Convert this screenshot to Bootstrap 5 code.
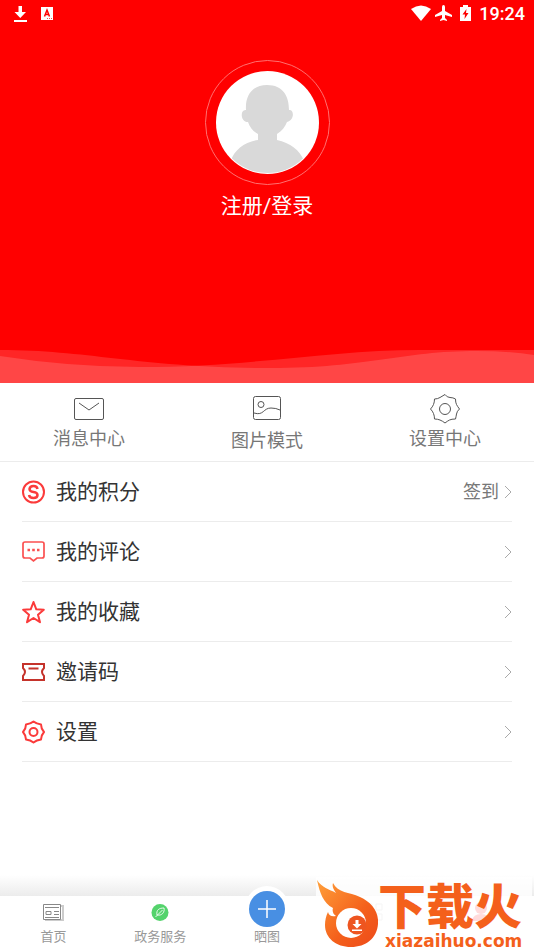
<!DOCTYPE html>
<html lang="zh-CN">
<head>
<meta charset="utf-8">
<meta name="viewport" content="width=device-width, initial-scale=1">
<title>个人中心</title>
<link href="https://cdn.jsdelivr.net/npm/bootstrap@5.3.0/dist/css/bootstrap.min.css" rel="stylesheet">
<style>
body{font-family:Roboto,"Noto Sans CJK SC",sans-serif;color:#333;background:#fff}
a{color:inherit;text-decoration:none}
svg{display:block;flex:none}
.hero{background:#f00}
.statusbar{height:27px;padding:0 9px 0 12px;font-size:18px;line-height:27px;font-weight:500}
.avatar-ring{width:125px;height:125px;margin-top:33px;border:1px solid #ff7070}
.login{font-size:21px;line-height:30px;margin:6px 0 128px}
.wave{width:100%;height:34px}
.shortcuts{border-bottom:1px solid #ececec;color:#777;font-size:18px;line-height:28px}
.shortcuts a{padding:10px 0 6px}
.menu{padding:0 22px}
.menu a{height:60px;border-bottom:1px solid #ececec;font-size:21px}
.menu .caption{margin-left:11px;padding-top:2px}
.menu .extra{font-size:18px;color:#777}
.shade{height:21px;background:linear-gradient(#fff,#ececec)}
.tabs{height:54px;background:#fff;color:#999;font-size:13px;line-height:20px}
.tabs a{padding-top:4px}
.plus{margin-top:-14px;margin-bottom:-3px}
.brand{right:2px;bottom:0;width:216px;height:73px;background:rgba(255,255,255,.8);color:#f4601b}
.brand-name{font:900 48px/48px "Noto Sans CJK SC",sans-serif;padding-top:2px;padding-bottom:5px}
.brand-url{font:700 17px/18px "DejaVu Sans",sans-serif;margin-left:7px}
</style>
</head>
<body>
<div class="d-flex flex-column min-vh-100">
<header class="hero d-flex flex-column align-items-center text-white">
  <div class="statusbar w-100 d-flex align-items-center">
    <svg width="17" height="18" viewBox="0 0 17 18"><path d="M6.500 1h3.500v6h4L8.250 13 2.500 7h4zM2 15h13v2H2z" fill="#fff"/></svg>
    <svg class="ms-2 me-auto" width="20" height="14" viewBox="0 0 20 14"><path fill="#fff" d="M4 0h12v13H4z"/><path d="M7.500 9.500L10 3l2.500 6.500M8 7.500h4" fill="none" stroke="#f00" stroke-width="1.500"/><path d="M10 11.500h5" stroke="#f00" stroke-opacity=".7" stroke-dasharray="1 1"/></svg>
    <svg width="20" height="17" viewBox="0 0 20 17"><path d="M0 4Q10-3 20 4L10 16z" fill="#fff"/></svg>
    <svg class="ms-1" width="17" height="18" viewBox="0 0 17 18"><path d="M8.500 0Q10 0 10 2v4l7 4v2l-7-2v3l2 2v1l-3.500-1L5 16v-1l2-2v-3l-7 2v-2l7-4V2q0-2 1.500-2z" fill="#fff"/></svg>
    <svg class="ms-2" width="11" height="18" viewBox="0 0 11 18"><path d="M3 0h5v2h3v14H0V2h3z" fill="#fff"/><path d="M6.500 4L2.500 9.500h2.500L4.500 14l4-6H6z" fill="#f00"/></svg>
    <span class="ms-2">19:24</span>
  </div>
  <a href="#" class="d-flex flex-column align-items-center">
    <span class="avatar-ring rounded-circle d-flex align-items-center justify-content-center">
      <svg width="103" height="103" viewBox="0 0 103 103"><defs><clipPath id="face"><circle cx="51.500" cy="51.500" r="50.500"/></clipPath></defs><circle cx="51.500" cy="51.500" r="51.500" fill="#fff"/><path clip-path="url(#face)" fill="#d9d9d9" d="M51 14C36 14 29 25 30 39C24 38 24 51 32 51C34 57 38 61 42 63V69C29 71 18 79 15 90V103H88V90C84 79 74 72 61 69V63C66 60 69 56 71 51C79 49 78 38 73 39C73 25 67 14 51 14z"/></svg>
    </span>
    <span class="login">注册/登录</span>
  </a>
  <svg class="wave" viewBox="0 0 534 34" preserveAspectRatio="none"><g fill="#fff" fill-opacity=".15"><path d="M0 1C90 1 140 19 270 19C370 19 400 2 477 2Q510 2 534 6V34H0z"/><path d="M0 7Q70 18 140 18C250 18 330 1 420 1H534V34H0z"/></g></svg>
</header>
<nav class="shortcuts row g-0 text-center">
  <a href="#" class="col d-flex flex-column align-items-center"><svg width="32" height="32" viewBox="0 0 32 32" fill="none" stroke="#555"><rect x="1.500" y="5.500" width="29" height="21" rx="1.500"/><path d="M6 10l10 7 10-7"/></svg><span>消息中心</span></a>
  <a href="#" class="col d-flex flex-column align-items-center"><svg width="32" height="34" viewBox="0 0 32 34" fill="none" stroke="#555"><rect x="2.500" y="3.500" width="27" height="23" rx="2"/><circle cx="10" cy="11.500" r="3"/><path d="M3 20c10 3 9-5 17-5q5 0 9 2"/></svg><span>图片模式</span></a>
  <a href="#" class="col d-flex flex-column align-items-center"><svg width="32" height="32" viewBox="0 0 32 32" fill="none" stroke="#555"><path d="M16 1.500q2 3 5 3t5.500 1.500q0 3.500 1 5.500t3 4.500q-2.500 2-3 5t-1 5q-4 0-6 1t-4.500 3q-2.500-2-5-3T5.500 26q0-3-1-5.500t-3-4.500q2-2 3-4.500t1-5.500q3 0 5.500-1.500t5-3z"/><circle cx="16" cy="16" r="5.500"/></svg><span>设置中心</span></a>
</nav>
<ul class="menu list-unstyled mb-0">
  <li><a href="#" class="d-flex align-items-center"><svg width="23" height="24" viewBox="0 0 23 24" fill="none" stroke="#fb3a3a" stroke-width="2"><circle cx="11.500" cy="12" r="10.500"/><path stroke-width="2.500" d="M15.500 9q-.5-3-4-3T7.500 9q0 2.500 4 3t4 3q0 3-4 3t-4.500-3"/></svg><span class="caption me-auto">我的积分</span><span class="extra me-1">签到</span><svg width="9" height="14" viewBox="0 0 9 14" fill="none" stroke="#aaa"><path d="M2 1l6 6-6 6"/></svg></a></li>
  <li><a href="#" class="d-flex align-items-center"><svg width="23" height="24" viewBox="0 0 23 24" fill="none" stroke="#fb5050" stroke-width="1.700"><path d="M3 2h17q2 0 2 2v12q0 2-2 2h-5l-3.500 3L8 18H3q-2 0-2-2V4q0-2 2-2z"/><path stroke-width="2.600" d="M5.500 10h2.500m2.200 0h2.600m2.200 0h2.500"/></svg><span class="caption me-auto">我的评论</span><svg width="9" height="14" viewBox="0 0 9 14" fill="none" stroke="#aaa"><path d="M2 1l6 6-6 6"/></svg></a></li>
  <li><a href="#" class="d-flex align-items-center"><svg width="23" height="24" viewBox="0 0 23 24" fill="none" stroke="#fb3a3a" stroke-width="2" stroke-linejoin="round"><path d="M11.500 2l2.800 7.300 7.500.4-5.800 5 2 7.500-6.500-4.200L5 22.200l2-7.500-5.800-5 7.500-.4z"/></svg><span class="caption me-auto">我的收藏</span><svg width="9" height="14" viewBox="0 0 9 14" fill="none" stroke="#aaa"><path d="M2 1l6 6-6 6"/></svg></a></li>
  <li><a href="#" class="d-flex align-items-center"><svg width="23" height="24" viewBox="0 0 23 24" fill="none" stroke="#c5332b" stroke-width="2"><path d="M1 4h21v4q-4 4 0 8v4H1v-4q4-4 0-8zM6.500 8.500h10"/></svg><span class="caption me-auto">邀请码</span><svg width="9" height="14" viewBox="0 0 9 14" fill="none" stroke="#aaa"><path d="M2 1l6 6-6 6"/></svg></a></li>
  <li><a href="#" class="d-flex align-items-center"><svg width="23" height="24" viewBox="0 0 23 24" fill="none" stroke="#fb3a3a" stroke-width="2" stroke-linejoin="round"><path d="M11.500 1.500q3 2.500 7.500 3 0 4 3 7.500-3 3.500-3 7.500-4.500.500-7.500 3-3-2.500-7.500-3 0-4-3-7.500 3-3.500 3-7.500 4.500-.5 7.500-3z"/><circle cx="11.500" cy="12" r="4"/></svg><span class="caption me-auto">设置</span><svg width="9" height="14" viewBox="0 0 9 14" fill="none" stroke="#aaa"><path d="M2 1l6 6-6 6"/></svg></a></li>
</ul>
<footer class="mt-auto position-relative">
  <div class="shade"></div>
  <nav class="tabs row g-0 text-center">
    <a href="#" class="col d-flex flex-column align-items-center"><svg width="22" height="27" viewBox="0 0 22 27"><path d="M18 6h3v14H3" fill="none" stroke="#ccc" stroke-width="2"/><path fill="#fff" stroke="#888" d="M1.500 4.500h17v15h-17z"/><path fill="none" stroke="#888" d="M3 7.500h14M4 11.500h5v3H4zm8 0h5m-5 3h5M3 17.500h14"/></svg><span>首页</span></a>
    <a href="#" class="col d-flex flex-column align-items-center"><svg width="18" height="27" viewBox="0 0 18 27"><circle cx="9" cy="12.500" r="8.500" fill="#54d36c"/><path fill="none" stroke="#fff" stroke-opacity=".85" d="M4.500 17l7-7M6 15c-1-5 2-7 7-7 1 4-2 8-7 7z"/></svg><span>政务服务</span></a>
    <a href="#" class="col d-flex flex-column align-items-center"><svg class="plus" width="44" height="44" viewBox="0 0 44 44"><circle cx="22" cy="22" r="22" fill="#fff"/><circle cx="22" cy="23" r="18" fill="#488fe3"/><path d="M13 23h18m-9-9v18" stroke="#fff" stroke-width="1.500"/></svg><span>晒图</span></a>
    <a href="#" class="col d-flex flex-column align-items-center" aria-label="应用"><svg width="20" height="27" viewBox="0 0 20 27" fill="none" stroke="#ccc"><path d="M2 4h6v6H2zm10 0h6v6h-6zM2 14h6v6H2zm10 0h6v6h-6z"/></svg></a>
    <a href="#" class="col d-flex flex-column align-items-center" aria-label="我的"><svg width="20" height="27" viewBox="0 0 20 27" fill="#ff4a4a"><circle cx="10" cy="8" r="6"/><path d="M1 21q1-7 9-7t9 7z"/></svg></a>
  </nav>
  <a href="#" class="brand position-absolute d-flex">
    <svg width="62" height="73" viewBox="0 0 62 73"><defs><linearGradient id="flame" x2="1" y2="1"><stop stop-color="#ffa03a"/><stop offset=".6" stop-color="#f4601b"/><stop offset="1" stop-color="#ed4a1b"/></linearGradient></defs><path fill="url(#flame)" d="M1 3c5 8 12 9 19 13-3-4-4-7-3-10 5 10 16 9 27 14 11 5 19 14 18 27-1 14-12 23-27 23C20 70 9 61 9 48c0-5 1-9 3-13 1 4 4 5 8 4-3-2-4-5-3-8C7 26 4 16 1 3z"/><circle cx="35" cy="46" r="15" fill="#fff"/><circle cx="41" cy="48" r="9.500" fill="#ee5520"/><path fill="#fff" d="M39.500 43h3v4h3L41 51.500 36.500 47h3zM36 52.500h10V54H36z"/></svg>
    <span class="d-flex flex-column"><span class="brand-name">下载火</span><span class="brand-url">xiazaihuo.com</span></span>
  </a>
</footer>
</div>
<script src="https://cdn.jsdelivr.net/npm/bootstrap@5.3.0/dist/js/bootstrap.bundle.min.js"></script>
</body>
</html>
